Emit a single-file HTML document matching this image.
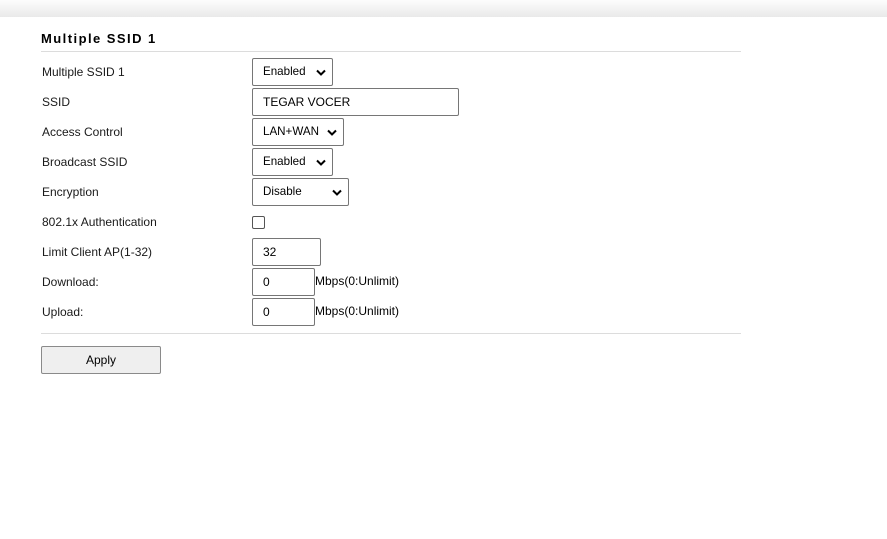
<!DOCTYPE html>
<html><head><style>
body{margin:0;width:887px;height:539px;background:#fff;font-family:"Liberation Sans",Arial,sans-serif;font-size:12px;color:#000;position:relative;overflow:hidden}
.top{position:absolute;left:0;top:0;width:887px;height:17px;background:linear-gradient(#fdfdfd,#e9e9e9)}
.h{position:absolute;left:41px;top:31px;font-weight:bold;font-size:13px;letter-spacing:1.45px;color:#000}
.line{position:absolute;left:41px;width:700px;height:1px;background:#dcdcdc}
.l{position:absolute;left:42px;line-height:14px;color:#1a1a1a}
.b{position:absolute;left:252px;height:26px;border:1px solid #767676;border-radius:2px;box-sizing:content-box;background:#fff;line-height:26px;padding-left:10px;font-size:12px}
.b svg{position:absolute;right:6px;top:10px}
.s{font-size:11.6px}
.m{position:absolute;left:315px;line-height:14px}
.btn{position:absolute;left:41px;top:346px;width:118px;height:26px;border:1px solid #8a8a8a;border-radius:2px;background:#efefef;text-align:center;line-height:26px}
.cb{position:absolute;left:252px;top:216px;width:11px;height:11px;border:1px solid #555;border-radius:2px}
</style></head><body>
<div class="top"></div>
<div class="h">Multiple SSID 1</div>
<div class="line" style="top:51px"></div>
<div class="l" style="top:65px">Multiple SSID 1</div>
<div class="l" style="top:95px">SSID</div>
<div class="l" style="top:125px">Access Control</div>
<div class="l" style="top:155px">Broadcast SSID</div>
<div class="l" style="top:185px">Encryption</div>
<div class="l" style="top:215px">802.1x Authentication</div>
<div class="l" style="top:245px">Limit Client AP(1-32)</div>
<div class="l" style="top:275px">Download:</div>
<div class="l" style="top:305px">Upload:</div>

<div class="b s" style="top:58px;width:69px">Enabled<svg width="10" height="7" viewBox="0 0 10 7"><path d="M1 1.5 5 5.5 9 1.5" fill="none" stroke="#000" stroke-width="2"/></svg></div>
<div class="b" style="top:88px;width:195px">TEGAR VOCER</div>
<div class="b s" style="top:118px;width:80px">LAN+WAN<svg width="10" height="7" viewBox="0 0 10 7"><path d="M1 1.5 5 5.5 9 1.5" fill="none" stroke="#000" stroke-width="2"/></svg></div>
<div class="b s" style="top:148px;width:69px">Enabled<svg width="10" height="7" viewBox="0 0 10 7"><path d="M1 1.5 5 5.5 9 1.5" fill="none" stroke="#000" stroke-width="2"/></svg></div>
<div class="b s" style="top:178px;width:85px">Disable<svg width="10" height="7" viewBox="0 0 10 7"><path d="M1 1.5 5 5.5 9 1.5" fill="none" stroke="#000" stroke-width="2"/></svg></div>
<div class="cb"></div>
<div class="b" style="top:238px;width:57px">32</div>
<div class="b" style="top:268px;width:51px">0</div>
<div class="m" style="top:274px">Mbps(0:Unlimit)</div>
<div class="b" style="top:298px;width:51px">0</div>
<div class="m" style="top:304px">Mbps(0:Unlimit)</div>
<div class="line" style="top:333px"></div>
<div class="btn">Apply</div>
</body></html>
